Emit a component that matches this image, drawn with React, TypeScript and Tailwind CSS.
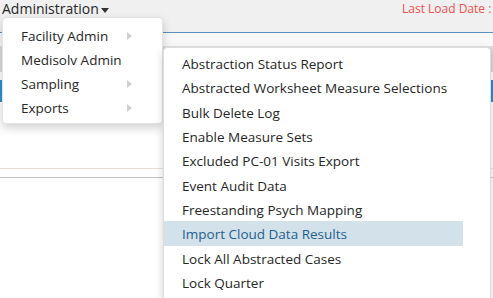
import React from "react";

const subItems = [
  "Abstraction Status Report",
  "Abstracted Worksheet Measure Selections",
  "Bulk Delete Log",
  "Enable Measure Sets",
  "Excluded PC-01 Visits Export",
  "Event Audit Data",
  "Freestanding Psych Mapping",
  "Import Cloud Data Results",
  "Lock All Abstracted Cases",
  "Lock Quarter",
];

const mainItems = [
  { label: "Facility Admin", arrow: true },
  { label: "Medisolv Admin", arrow: false },
  { label: "Sampling", arrow: true },
  { label: "Exports", arrow: true },
];

function RightCaret() {
  return (
    <svg width="5" height="8" viewBox="0 0 5 8" className="block">
      <path d="M0 0 L5 4 L0 8 Z" fill="#cfcfcf" />
    </svg>
  );
}

export default function App() {
  return (
    <div
      className="relative w-[493px] h-[298px] overflow-hidden bg-white text-[#262626]"
      style={{ fontFamily: '"Open Sans", "Noto Sans", sans-serif' }}
    >
      {/* header */}
      <div className="h-[33px] bg-[#f0f0f0] border-b border-[#5b8fc0] flex justify-between">
        <div className="flex items-start pl-[2px] pt-[0px] text-[14px] leading-[18px] text-[#262626]">
          <span>Administration</span>
          <svg width="8" height="5" viewBox="0 0 8 5" className="ml-[2px] mt-[8px]">
            <path d="M0 0 L8 0 L4 5 Z" fill="#333" />
          </svg>
        </div>
        <div className="pt-[1px] text-[12px] leading-[16px] text-[#f0504f] whitespace-nowrap w-[91px] overflow-hidden">
          Last Load Date : 7/21/2023
        </div>
      </div>
      {/* background content */}
      <div className="h-[14px] bg-[#f8f8f8] border-b border-[#e2e2e2]" />
      <div className="h-[25px] bg-[#d9d9d9]" />
      <div className="h-[8px] bg-white" />
      <div className="h-[22px] bg-[#2e8fd2]" />
      <div className="h-[67px] bg-white border-b border-[#e8dfd4]" />
      <div className="h-[9px] bg-white border-b border-[#c2c2c2]" />

      {/* first menu */}
      <div className="absolute left-[2px] top-[17px] w-[161px] h-[107px] bg-white rounded-[4px] border border-[#e3e3e3] shadow-[0_4px_10px_rgba(0,0,0,0.18)] pt-[6px] z-10">
        {mainItems.map((it) => (
          <div
            key={it.label}
            className="h-[24px] flex items-center justify-between pl-[18px] pr-[30px] text-[13.5px] leading-[20px]"
          >
            <span>{it.label}</span>
            {it.arrow && <RightCaret />}
          </div>
        ))}
      </div>

      {/* submenu */}
      <div className="absolute left-[163px] top-[47px] w-[328px] h-[270px] bg-white rounded-[4px] border border-[#dcdcdc] shadow-[0_4px_10px_rgba(0,0,0,0.18)] pt-[3px] z-20">
        {subItems.map((s, i) => (
          <div
            key={s}
            className={
              "h-[24.33px] flex items-center pl-[18px] w-[299px] text-[13.5px] leading-[20px] whitespace-nowrap " +
              (i === 7 ? "bg-[#d3e1ea] text-[#1f5f8e]" : "")
            }
          >
            <span className="pt-[2px]">{s}</span>
          </div>
        ))}
      </div>
    </div>
  );
}
